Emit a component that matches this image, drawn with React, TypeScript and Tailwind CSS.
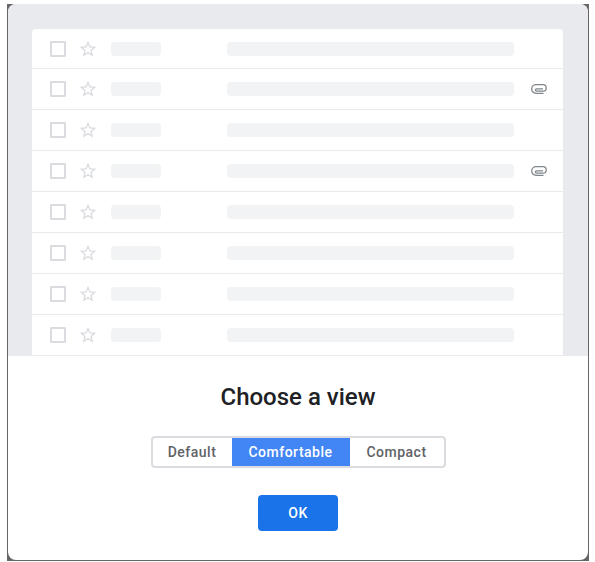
const rows = [false, true, false, true, false, false, false, false];

function Row({ clip, first }: { clip: boolean; first: boolean }) {
  return (
    <div className={`flex shrink-0 items-center border-b border-[#e8eaed] ${first ? "h-[40px]" : "h-[41px]"}`}>
      <div className="ml-[18px] h-4 w-4 shrink-0 rounded-[1px] border-2 border-[#dadce0]" />
      <svg className="ml-[12px] h-[20px] w-[20px] shrink-0" viewBox="0 0 24 24" fill="#dadce0">
        <path d="M22 9.24l-7.19-.62L12 2 9.19 8.63 2 9.24l5.46 4.73L5.82 21 12 17.27 18.18 21l-1.63-7.03L22 9.24zM12 15.4l-3.76 2.27 1-4.28-3.32-2.88 4.38-.38L12 6.1l1.71 4.04 4.38.38-3.32 2.88 1 4.28L12 15.4z" />
      </svg>
      <div className="ml-[13px] h-[14px] w-[50px] shrink-0 rounded-sm bg-[#f1f3f4]" />
      <div className="ml-[66px] h-[14px] w-[287px] shrink-0 rounded-sm bg-[#f1f3f4]" />
      {clip && (
        <svg className="ml-[17px] h-[10px] w-4 shrink-0" viewBox="0 0 16 10" fill="none" stroke="#80868b" strokeWidth="1.3">
          <path d="M12.5 9.3H5a4.3 4.3 0 0 1 0-8.6H12a3.2 3.2 0 0 1 0 6.4H5.5a1.1 1.1 0 0 1 0-2.2H12" />
        </svg>
      )}
    </div>
  );
}

export default function App() {
  return (
    <div className="h-[562px] w-[595px] overflow-hidden bg-white pl-[7px] pt-1 font-['Roboto',sans-serif]">
      <div className="h-[557px] w-[582px] bg-[#666666] px-px pb-px">
        <div className="flex h-full flex-col overflow-hidden rounded-lg bg-white">
          <div className="h-[352px] shrink-0 overflow-hidden bg-[#e8eaed] pl-6 pr-[25px] pt-[25px]">
            <div className="flex flex-col overflow-hidden rounded-t bg-white">
              {rows.map((clip, i) => (
                <Row key={i} clip={clip} first={i === 0} />
              ))}
            </div>
          </div>
          <div className="flex flex-1 flex-col items-center">
            <h1 className="mt-[26px] text-2xl leading-[30px] font-medium text-[#202124]">Choose a view</h1>
            <div className="mt-6 flex h-8 w-[295px] overflow-hidden rounded border-2 border-[#dadce0] text-sm font-medium tracking-[0.5px] text-[#5f6368]">
              <div className="flex w-[79px] items-center justify-center">Default</div>
              <div className="-my-0.5 flex w-[118px] items-center justify-center bg-[#4285f4] text-white">Comfortable</div>
              <div className="flex flex-1 items-center justify-center">Compact</div>
            </div>
            <button className="mt-[27px] h-9 w-20 rounded bg-[#1a73e8] text-sm font-medium tracking-[0.4px] text-white">OK</button>
          </div>
        </div>
      </div>
    </div>
  );
}
